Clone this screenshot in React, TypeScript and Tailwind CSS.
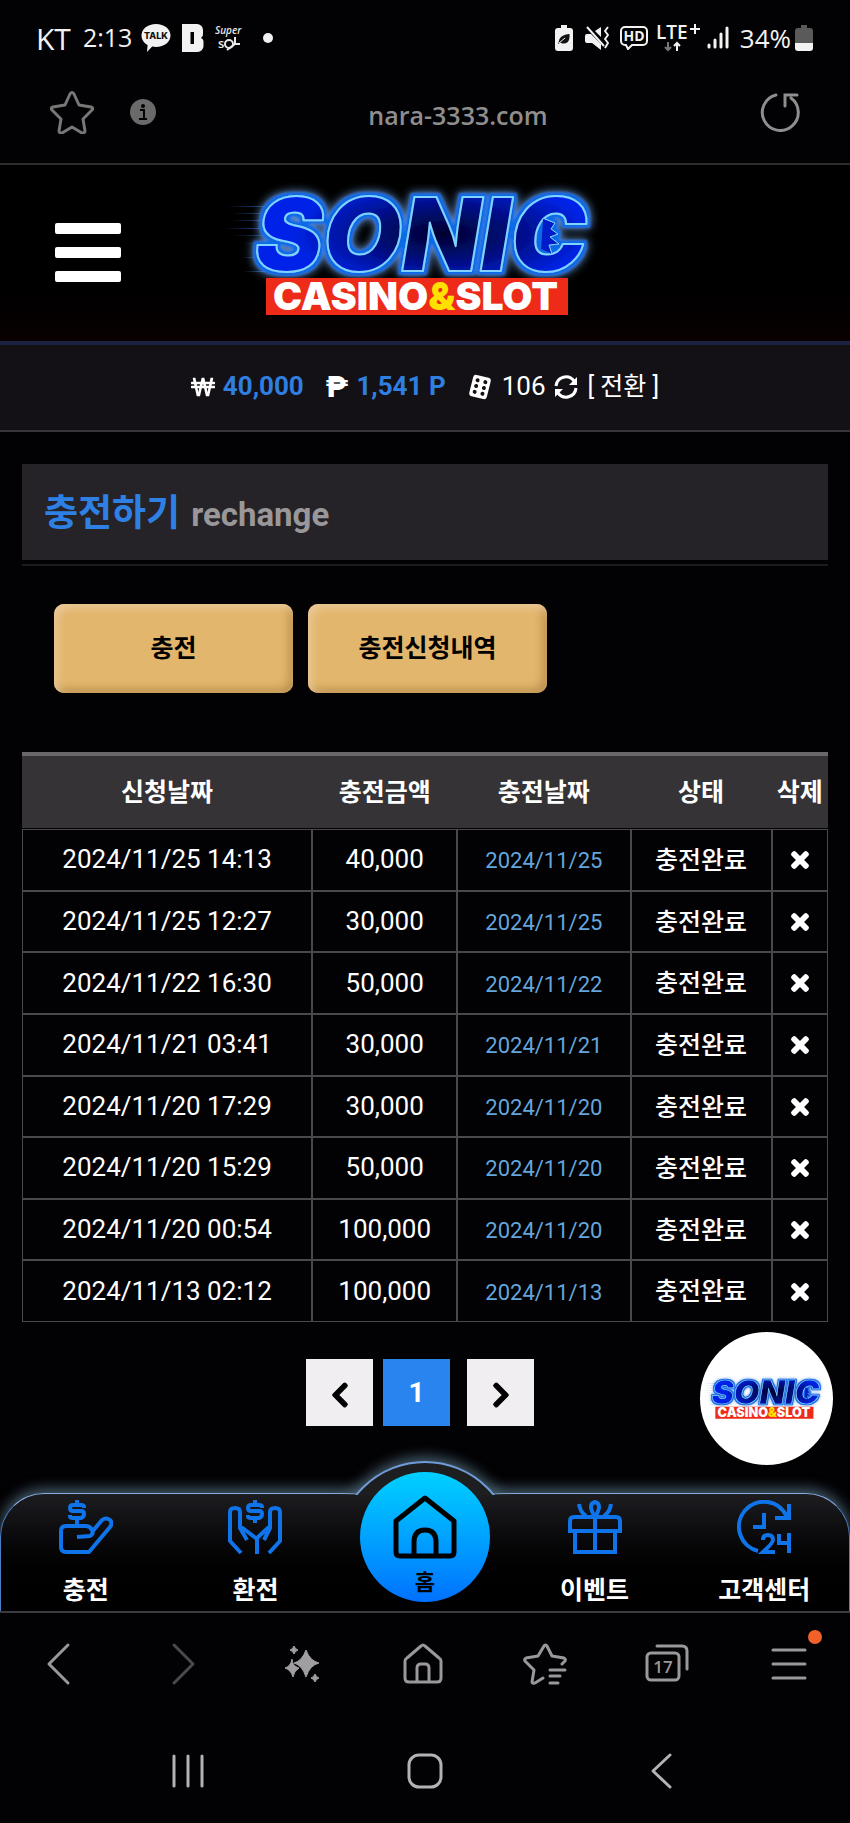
import { useState } from 'react'
import { FaWonSign, FaTimes, FaChevronLeft, FaChevronRight } from 'react-icons/fa'

const rows = [
    { requested: '2024/11/25 14:13', amount: '40,000', charged: '2024/11/25' },
    { requested: '2024/11/25 12:27', amount: '30,000', charged: '2024/11/25' },
    { requested: '2024/11/22 16:30', amount: '50,000', charged: '2024/11/22' },
    { requested: '2024/11/21 03:41', amount: '30,000', charged: '2024/11/21' },
    { requested: '2024/11/20 17:29', amount: '30,000', charged: '2024/11/20' },
    { requested: '2024/11/20 15:29', amount: '50,000', charged: '2024/11/20' },
    { requested: '2024/11/20 00:54', amount: '100,000', charged: '2024/11/20' },
    { requested: '2024/11/13 02:12', amount: '100,000', charged: '2024/11/13' },
]

function Logo({ id, className }: { id: string; className: string }) {
    return (
        <svg viewBox="0 -26 400 178" className={className} role="img" aria-label="SONIC CASINO&SLOT">
            <defs>
                {/* solid blue rim plus a soft outer glow */}
                <filter id={`${id}-glow`} x="-10%" y="-30%" width="120%" height="160%">
                    <feMorphology in="SourceAlpha" operator="dilate" radius="3" result="rim" />
                    <feGaussianBlur in="rim" stdDeviation="1" result="rimSoft" />
                    <feFlood floodColor="#0a6ae6" />
                    <feComposite in2="rimSoft" operator="in" result="rimBlue" />
                    <feGaussianBlur in="rim" stdDeviation="5" result="halo" />
                    <feFlood floodColor="#6a9fe0" />
                    <feComposite in2="halo" operator="in" result="haloBlue" />
                    <feMerge>
                        <feMergeNode in="haloBlue" />
                        <feMergeNode in="rimBlue" />
                        <feMergeNode in="SourceGraphic" />
                    </feMerge>
                </filter>
                <radialGradient id={`${id}-fill`} cx="0.56" cy="0.5" r="0.5">
                    <stop offset="0" stopColor="#000330" />
                    <stop offset="0.4" stopColor="#000a78" />
                    <stop offset="0.9" stopColor="#0024e8" />
                </radialGradient>
                <linearGradient id={`${id}-fade`} x1="0" x2="1">
                    <stop offset="0" stopColor="#2f6fd8" stopOpacity="0" />
                    <stop offset="1" stopColor="#2f6fd8" />
                </linearGradient>
            </defs>
            {/* speed lines */}
            <g fill={`url(#${id}-fade)`}>
                <rect x="2" y="15" width="60" height="1" />
                <rect x="6" y="22" width="60" height="1" />
                <rect x="4" y="29" width="60" height="1" />
                <rect x="0" y="37" width="60" height="1" />
                <rect x="8" y="44" width="60" height="1" />
                <rect x="18" y="52" width="40" height="1" />
                <rect x="16" y="66" width="30" height="1" />
                <rect x="18" y="80" width="30" height="1" />
            </g>
            <g filter={`url(#${id}-glow)`} strokeLinejoin="round">
                <text x="30" y="80" fontFamily="Inter, sans-serif" fontWeight="900" fontStyle="italic" fontSize="102" fill={`url(#${id}-fill)`} stroke="#7fd4ff" strokeWidth="2">
                    SONIC
                </text>
                {/* quills inside the C */}
                <path d="M318 28l12 4-4 6 7 5-8 3 9 7-10 1 3 9-11-5z" fill="#001cc8" />
                <path d="M320 28l10 4-4 6 7 5-8 3 9 7-10 1 3 9" fill="none" stroke="#7fd4ff" strokeWidth="1" />
            </g>
            <rect x="41" y="87" width="302" height="37" fill="#ee2a18" />
            <text x="48" y="119" fontFamily="Inter, sans-serif" fontWeight="900" fontSize="39" fill="#fff">
                CASINO<tspan fill="#ffe000">&amp;</tspan>SLOT
            </text>
        </svg>
    )
}

function StatusBar() {
    return (
        <div className="flex h-[76px] items-center justify-between pl-[36px] pr-[37px] font-['Open_Sans','Noto_Sans',sans-serif] text-[#f2f2f2]">
            <div className="flex items-center">
                <span className="text-[30px]">KT</span>
                <span className="ml-[12px] text-[25px] font-medium">2:13</span>
                <svg viewBox="0 0 30 28" className="ml-[9px] h-[28px] w-[30px]" aria-hidden="true">
                    <path d="M15 0c8.300 0 14.500 5 14.500 11.500S23.300 23 15 23c-1.300 0-2.600-.1-3.800-.4L6 28l.6-7C2.900 19 .5 15.500.5 11.500.5 5 6.700 0 15 0z" fill="#f2f2f2" />
                    <text x="15" y="15" textAnchor="middle" fontFamily="Inter, sans-serif" fontSize="9" fontWeight="800" fill="#111">TALK</text>
                </svg>
                <svg viewBox="0 0 22 28" className="ml-[11px] h-[28px] w-[22px]" aria-hidden="true">
                    <path d="M0 0h15a6 6 0 0 1 6 6v4a4 4 0 0 1-2 4 4 4 0 0 1 2.500 4v4a6 6 0 0 1-6 6H0z" fill="#f2f2f2" />
                    <rect x="8.500" y="8" width="3.500" height="12" fill="#000" />
                </svg>
                <svg viewBox="0 0 28 30" className="ml-[11px] h-[30px] w-[28px]" aria-hidden="true">
                    <g fontFamily="Open Sans, sans-serif" fill="#e8e8e8">
                        <text x="0" y="11" fontSize="10" fontStyle="italic" fontWeight="600">Super</text>
                        <text x="3" y="25" fontSize="13" fontWeight="600">s</text>
                    </g>
                    <circle cx="14" cy="21" r="4" fill="none" stroke="#e8e8e8" strokeWidth="2" />
                    <path d="M20 14v8M12 27l8-6h5" fill="none" stroke="#e8e8e8" strokeWidth="2" />
                </svg>
                <span className="ml-5 size-[10px] rounded-full bg-[#f2f2f2]" />
            </div>
            <div className="flex items-center">
                <svg viewBox="0 0 18 26" className="h-[26px] w-[18px]" aria-hidden="true">
                    <path d="M6 0h6v3h3a3 3 0 0 1 3 3v17a3 3 0 0 1-3 3H3a3 3 0 0 1-3-3V6a3 3 0 0 1 3-3h3z" fill="#f2f2f2" />
                    <path d="M14.500 9c.5 6-1.500 10-6 9.500-1.500 0-2.500-.5-3-1L3 19l1-3c.5-4 4-6.500 10.500-7z" fill="#111" />
                    <path d="M4 18l6-5" stroke="#f2f2f2" strokeWidth="1" />
                </svg>
                <svg viewBox="0 0 26 26" className="ml-[12px] h-[26px] w-[26px]" fill="none" stroke="#f2f2f2" aria-hidden="true">
                    <path d="M0 11a2 2 0 0 1 2-2h4l10 10v6l-9-7H2a2 2 0 0 1-2-2zM10 6l6-4v10z" fill="#f2f2f2" stroke="none" />
                    <path d="M2 2l17 19" strokeWidth="2" />
                    <path d="M23 2l-3 4 3 4-3 4 3 4-3 5" strokeWidth="2" strokeLinejoin="round" />
                </svg>
                <svg viewBox="0 0 28 24" className="ml-[9px] h-[24px] w-[28px]" fill="none" stroke="#f2f2f2" strokeWidth="2" aria-hidden="true">
                    <path d="M5 1h18a4 4 0 0 1 4 4v10a4 4 0 0 1-4 4H12l-4 4-2-4H5a4 4 0 0 1-4-4V5a4 4 0 0 1 4-4z" />
                    <text x="14" y="15" textAnchor="middle" fontFamily="Open Sans, sans-serif" fontSize="14" fontWeight="700" fill="#f2f2f2" stroke="none">HD</text>
                </svg>
                <svg viewBox="0 -6 44 40" className="ml-2 h-[40px] w-[44px]" aria-hidden="true">
                    <text x="0" y="15" fontFamily="Open Sans, sans-serif" fontSize="19" fontWeight="600" fill="#f2f2f2">LTE</text>
                    <path d="M34 5h10M39 0v10" stroke="#f2f2f2" strokeWidth="2" />
                    <path d="M12 18v8M9 23l3 3 3-3" stroke="#777" strokeWidth="2" fill="none" />
                    <path d="M21 27v-8M18 22l3-3 3 3" stroke="#f2f2f2" strokeWidth="2" fill="none" />
                </svg>
                <svg viewBox="0 0 24 26" className="ml-[6px] h-[26px] w-[24px]" stroke="#f2f2f2" strokeWidth="3" strokeLinecap="round" aria-hidden="true">
                    <path d="M3 20v2M9 15v7M15 9v13M21 3v19" />
                </svg>
                <span className="ml-[10px] text-[26px]">34%</span>
                <svg viewBox="0 0 18 26" className="ml-1 h-[26px] w-[18px]" aria-hidden="true">
                    <path d="M6 0h6v3h3a3 3 0 0 1 3 3v12H0V6a3 3 0 0 1 3-3h3z" fill="#5a5a5a" />
                    <path d="M0 18h18v5a3 3 0 0 1-3 3H3a3 3 0 0 1-3-3z" fill="#f2f2f2" />
                </svg>
            </div>
        </div>
    )
}

function AddressBar() {
    return (
        <div className="flex h-[89px] items-center justify-between border-b-2 border-[#2c2c2c] px-[50px] pb-4">
            <div className="flex w-[106px] items-center justify-between">
                <button aria-label="Bookmark">
                    <svg viewBox="0 0 44 44" className="size-[44px]" fill="none" stroke="#777" strokeWidth="3" strokeLinejoin="round">
                        <path d="M20 4q2-3 4 0l5 11 12 2q3 1 1 3l-9 9 2 12q0 2-3 2l-10-6-10 6q-3 0-3-2l2-12-9-9q-2-2 1-3l12-2z" />
                    </svg>
                </button>
                <button aria-label="Site information">
                    <svg viewBox="0 0 26 26" className="size-[26px]">
                        <circle cx="13" cy="13" r="13" fill="#6a6a6a" />
                        <circle cx="13" cy="7" r="2" fill="#000" />
                        <path d="M10 11h4v9M9 20h8" stroke="#000" strokeWidth="2" fill="none" />
                    </svg>
                </button>
            </div>
            <span className="pt-2 font-['Open_Sans','Noto_Sans',sans-serif] text-[25px] font-semibold text-[#8e8e8e]">nara-3333.com</span>
            <button aria-label="Reload">
                <svg viewBox="0 0 40 40" className="size-[40px]" fill="none" stroke="#8e8e8e" strokeWidth="3" strokeLinecap="round">
                    <path d="M16 3A18 18 0 1 0 31 6M25 14V3h12" />
                </svg>
            </button>
        </div>
    )
}

function SiteHeader() {
    return (
        <header className="grid h-[180px] grid-cols-[1fr_400px_1fr] items-center border-b-4 border-[#1b2242] bg-gradient-to-b from-black from-50% to-[#0b0001] px-[22px]">
            <button aria-label="메뉴" className="ml-[33px] flex w-[66px] flex-col gap-[13px] pb-1">
                <span className="h-[11px] rounded-xs bg-white" />
                <span className="h-[11px] rounded-xs bg-white" />
                <span className="h-[11px] rounded-xs bg-white" />
            </button>
            <a href="#home">
                <Logo id="header" className="w-full" />
            </a>
        </header>
    )
}

function WalletBar() {
    return (
        <div className="flex h-[87px] items-center justify-center border-b-2 border-[#37353a] bg-[#131115] pb-[2px] text-[26px]">
            <FaWonSign className="text-[24px]" />
            <span className="ml-2 font-bold text-[#2f7fe0]">40,000</span>
            <span className="ml-[22px] text-[30px] font-black">₱</span>
            <span className="ml-2 font-bold text-[#2f7fe0]">1,541 P</span>
            <svg viewBox="0 0 24 26" className="ml-[22px] h-[26px] w-[24px]" aria-hidden="true">
                <g transform="rotate(14 12 13)">
                    <rect x="3" y="2" width="18" height="22" rx="3" fill="#fff" />
                    <g fill="#131115">
                        <circle cx="8" cy="7" r="2" />
                        <circle cx="16" cy="7" r="2" />
                        <circle cx="8" cy="13" r="2" />
                        <circle cx="16" cy="13" r="2" />
                        <circle cx="8" cy="19" r="2" />
                        <circle cx="16" cy="19" r="2" />
                    </g>
                </g>
            </svg>
            <span className="ml-[10px]">106</span>
            <button className="ml-2 flex items-center gap-[10px]">
                <svg viewBox="0 0 24 24" className="size-[24px]" fill="none" stroke="#fff" strokeWidth="3" aria-hidden="true">
                    <path d="M2 11a10 10 0 0 1 18-5M22 13a10 10 0 0 1-18 5" />
                    <path d="M23 2v8h-8zM1 22v-8h8z" fill="#fff" stroke="none" />
                </svg>
                <span className="text-[25px]">[ 전환 ]</span>
            </button>
        </div>
    )
}

function HistoryTable() {
    return (
        <table className="mt-[59px] h-[570px] w-full table-fixed border-separate border-spacing-0 text-center">
            <colgroup>
                <col className="w-[36%]" />
                <col className="w-[18%]" />
                <col className="w-[21.5%]" />
                <col className="w-[17.5%]" />
                <col className="w-[7%]" />
            </colgroup>
            <thead>
                <tr className="h-[77px] text-[25px]">
                    {['신청날짜', '충전금액', '충전날짜', '상태', '삭제'].map((label) => (
                        <th key={label} scope="col" className="border-t-4 border-b border-t-[#6a686b] border-b-[#020103] bg-[#353336] p-0 pt-[2px] font-bold whitespace-nowrap">
                            {label}
                        </th>
                    ))}
                </tr>
            </thead>
            <tbody>
                {rows.map((row) => (
                    <tr key={row.requested}>
                        <td className="border border-[#4a484c] p-0 text-[26px]">{row.requested}</td>
                        <td className="border border-[#4a484c] p-0 text-[26px]">{row.amount}</td>
                        <td className="border border-[#4a484c] p-0 pt-[2px] text-[22px] text-[#64a6dc]">{row.charged}</td>
                        <td className="border border-[#4a484c] p-0 pt-[2px] text-[25px] font-medium">충전완료</td>
                        <td className="border border-[#4a484c] p-0">
                            <button aria-label={`${row.requested} 삭제`} className="align-middle">
                                <FaTimes className="text-[24px]" stroke="currentColor" strokeWidth="30" />
                            </button>
                        </td>
                    </tr>
                ))}
            </tbody>
        </table>
    )
}

function TabBar() {
    const item = 'flex flex-col items-center gap-[18px] pt-[6px] text-[25px] font-bold'
    return (
        <nav className="relative grid h-[118px] grid-cols-5 rounded-t-[44px] border border-b-0 border-[#4a7fc4] border-t-[#86abde] bg-gradient-to-b from-[#1d1c20] to-black shadow-[0_-4px_14px_#47606f]">
            {/* arch behind the home button */}
            <div className="absolute -top-[50px] left-1/2 h-[51px] w-[240px] -translate-x-1/2 overflow-hidden">
                <div className="mx-auto mt-[17px] size-[178px] rounded-full border-2 border-[#6f9bd8] bg-[#1d1e20] shadow-[0_-4px_14px_#47606f]" />
            </div>
            <a href="#deposit" className={item}>
                <svg viewBox="0 0 54 54" className="size-[54px]" fill="none" stroke="#0f74ea" strokeWidth="4" strokeLinejoin="round">
                    <path d="M25 8V7q0-2-3-2h-8q-3 0-3 3t3 3h8q3 0 3 3t-3 4h-8q-3 0-3-2v-1M18 0v5M18 18v7" />
                    <path d="M18 37l13-1q4-2 2-6-2-4-6-4H7q-5 0-5 5v16q0 5 5 5h23l21-25q3-4 0-7-4-3-8 0L33 32" />
                </svg>
                충전
            </a>
            <a href="#withdraw" className={item}>
                <svg viewBox="0 0 54 54" className="size-[54px]" fill="none" stroke="#0f74ea" strokeWidth="4" strokeLinejoin="round">
                    <path d="M34 8V7q0-2-3-2h-8q-3 0-3 3t3 3h8q3 0 3 3t-3 4h-8q-3 0-3-2v-1M27 0v5M27 18v5" />
                    <path d="M13 53L2 41V12q0-4 5-4t5 4v16l7 12M12 26l17 13v15M41 53l11-12V12q0-4-5-4t-5 4v16l-6 12M42 26l-13 12" />
                </svg>
                환전
            </a>
            <a href="#home" className="relative -mt-[22px] flex size-[130px] flex-col items-center justify-self-center rounded-full bg-gradient-to-b from-[#00d0ff] to-[#0070ff] pt-[23px] text-[22px] font-bold text-black">
                <svg viewBox="0 0 64 64" className="mb-[10px] size-[64px] shrink-0" fill="none" stroke="#000" strokeWidth="5" strokeLinejoin="round">
                    <path d="M3 26L32 3l29 23v31q0 4-4 4H7q-4 0-4-4zM21 60V47q0-12 11-12t11 12v13" />
                </svg>
                <span className="leading-[28px]">홈</span>
            </a>
            <a href="#event" className={item}>
                <svg viewBox="0 0 54 54" className="size-[54px]" fill="none" stroke="#0f74ea" strokeWidth="4">
                    <path d="M2 31V21q0-4 4-4h42q4 0 4 4v10zM7 31v21h40V31M27 17v35M27 17q-8-13 0-15 8 2 0 15M11 4q1 8 7 12M43 4q-1 8-7 12" />
                </svg>
                이벤트
            </a>
            <a href="#support" className={item}>
                <svg viewBox="0 0 54 54" className="size-[54px]" fill="none" stroke="#0f74ea" strokeWidth="4">
                    <path d="M21 51A25 25 0 1 1 50 17M52 4v14H38M27 13v14H16" />
                    <path d="M26 40q0-5 5-5t5 5q0 3-10 12h12M42 34v9h10M52 33v20" />
                </svg>
                고객센터
            </a>
        </nav>
    )
}

function BrowserToolbar() {
    const icon = 'size-[44px]'
    return (
        <div className="relative flex h-[108px] items-center justify-between border-t-2 border-[#3c3b3f] bg-[#020103] pr-[39px] pb-1 pl-[36px]">
            <button aria-label="Back">
                <svg viewBox="0 0 44 44" className={icon} fill="none" stroke="#9a989b" strokeWidth="3" strokeLinecap="round" strokeLinejoin="round">
                    <path d="M32 3L13 22l19 19" />
                </svg>
            </button>
            <button aria-label="Forward">
                <svg viewBox="0 0 44 44" className={icon} fill="none" stroke="#4a494b" strokeWidth="3" strokeLinecap="round" strokeLinejoin="round">
                    <path d="M16 3l19 19-19 19" />
                </svg>
            </button>
            <button aria-label="AI assist">
                <svg viewBox="0 0 44 44" className={icon} fill="#a09ea1" stroke="#a09ea1" strokeWidth="1" strokeLinejoin="round">
                    <path d="M26 8q4 11 13 13-9 2-13 14-4-12-12-14 8-2 12-13zM14 4q1 3 4 4-3 1-4 4-1-3-4-4 3-1 4-4zM35 32q1 3 4 4-3 1-4 4-1-3-4-4 3-1 4-4zM12 17q0 7 7 9-5 3-6 9-2-7-8-9 6-2 7-9z" />
                </svg>
            </button>
            <button aria-label="Home">
                <svg viewBox="0 0 44 44" className={icon} fill="none" stroke="#9a989b" strokeWidth="3" strokeLinejoin="round">
                    <path d="M4 19q0-2 2-3L20 4q2-2 4 0l14 12q2 1 2 3v17q0 4-4 4H8q-4 0-4-4zM16 40V26q0-4 4-4h4q4 0 4 4v14" />
                </svg>
            </button>
            <button aria-label="Bookmarks">
                <svg viewBox="0 0 44 44" className={icon} fill="none" stroke="#9a989b" strokeWidth="3" strokeLinecap="round" strokeLinejoin="round">
                    <path d="M39 22l3-3q1-2-1-3l-12-2-5-10q-2-2-3 0l-6 10-12 2q-2 1-1 3l9 9-2 12q1 2 3 1l8-5M27 28h15M27 34h10M27 41h8" />
                </svg>
            </button>
            <button aria-label="Tabs">
                <svg viewBox="0 0 44 44" className={icon} fill="none" stroke="#9a989b" strokeWidth="3" strokeLinecap="round">
                    <rect x="2" y="11" width="32" height="27" rx="4" />
                    <path d="M12 4h25q5 0 5 5v18" />
                    <text x="18" y="31" textAnchor="middle" fontFamily="Open Sans, sans-serif" fontSize="17" fontWeight="600" fill="#9a989b" stroke="none">17</text>
                </svg>
            </button>
            <button aria-label="Menu" className="relative">
                <svg viewBox="0 0 44 44" className={icon} fill="none" stroke="#9a989b" strokeWidth="3" strokeLinecap="round">
                    <path d="M6 8h32M6 22h32M6 36h32" />
                </svg>
                <span className="absolute -top-[12px] -right-[11px] size-[14px] rounded-full bg-[#f0622a]" />
            </button>
        </div>
    )
}

function SystemNav() {
    const icon = 'size-[36px]'
    return (
        <div className="mx-auto flex h-[104px] w-3/5 items-center justify-between">
            <button aria-label="Recent apps">
                <svg viewBox="0 0 36 36" className={icon} stroke="#b4b2b5" strokeWidth="3" strokeLinecap="round">
                    <path d="M4 3v30M18 3v30M32 3v30" />
                </svg>
            </button>
            <button aria-label="Home screen">
                <svg viewBox="0 0 36 36" className={icon} fill="none" stroke="#b4b2b5" strokeWidth="3">
                    <rect x="2" y="2" width="32" height="32" rx="10" />
                </svg>
            </button>
            <button aria-label="System back">
                <svg viewBox="0 0 36 36" className={icon} fill="none" stroke="#b4b2b5" strokeWidth="3" strokeLinecap="round" strokeLinejoin="round">
                    <path d="M26 2L9 18l17 16" />
                </svg>
            </button>
        </div>
    )
}

export default function App() {
    const [tab, setTab] = useState('history')
    const tabClass =
        'h-[89px] w-[239px] rounded-[10px] bg-[#e2b66c] text-[25px] font-bold text-black shadow-[inset_4px_4px_8px_#ebc99a,inset_-4px_-4px_8px_#b98f4c]'

    return (
        <div className="min-h-screen bg-[#020103] font-[Roboto,'Noto_Sans_CJK_KR',sans-serif] text-white">
            <StatusBar />
            <AddressBar />
            <SiteHeader />
            <WalletBar />

            <main className="px-[22px] pt-8">
                {/* Page title */}
                <div className="border-b-2 border-[#1c1b1d] pb-1">
                    <h1 className="flex h-[96px] items-baseline gap-[11px] bg-[#252327] px-[22px] pt-[22px] leading-[56px]">
                        <span className="text-[37px] font-bold text-[#2f80e4]">충전하기</span>
                        <span className="text-[33px] font-bold text-[#99979a]">rechange</span>
                    </h1>
                </div>

                <div className="mt-[38px] ml-8 flex gap-[15px]">
                    <button className={tabClass} aria-pressed={tab === 'charge'} onClick={() => setTab('charge')}>
                        충전
                    </button>
                    <button className={tabClass} aria-pressed={tab === 'history'} onClick={() => setTab('history')}>
                        충전신청내역
                    </button>
                </div>

                <HistoryTable />

                {/* Pagination */}
                <div className="relative flex justify-center gap-[10px] pt-[37px] pr-[10px] pb-[67px]">
                    <button aria-label="이전" className="flex size-[67px] items-center justify-center bg-[#f0eef1] pt-1 text-black">
                        <FaChevronLeft className="text-[28px]" stroke="currentColor" strokeWidth="20" />
                    </button>
                    <button aria-current="page" className="size-[67px] bg-[#2a84f0] text-[28px] font-bold">
                        1
                    </button>
                    <button aria-label="다음" className="ml-[7px] flex size-[67px] items-center justify-center bg-[#f0eef1] pt-1 text-black">
                        <FaChevronRight className="text-[28px]" stroke="currentColor" strokeWidth="20" />
                    </button>
                    <a href="#top" className="absolute top-[10px] -right-[5px] flex size-[133px] items-center justify-center rounded-full bg-white">
                        <Logo id="badge" className="w-[130px]" />
                    </a>
                </div>
            </main>

            <TabBar />
            <BrowserToolbar />
            <SystemNav />
        </div>
    )
}
